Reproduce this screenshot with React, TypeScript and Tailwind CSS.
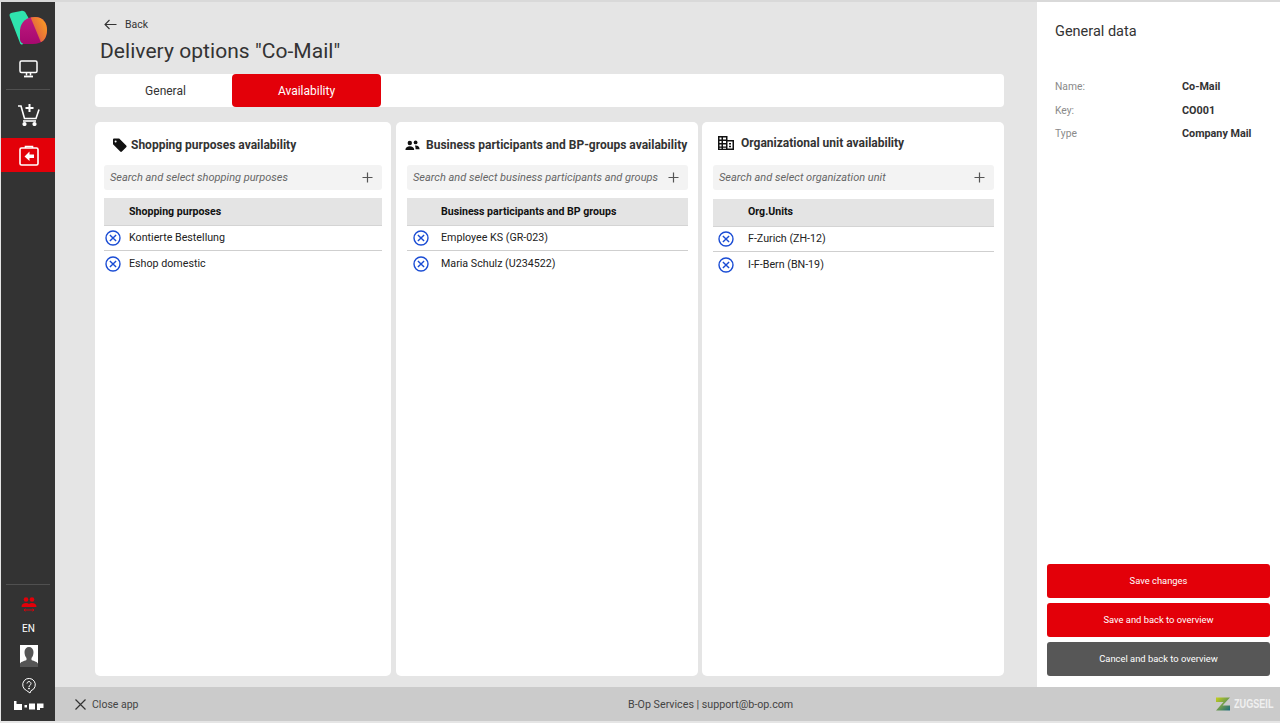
import React from "react";

const XCircle = () => (
  <svg width="16" height="16" viewBox="0 0 16 16" fill="none" stroke="#1a4cd4" strokeWidth="1.4" className="shrink-0">
    <circle cx="8" cy="8" r="7" />
    <path d="M4.900 4.900l6.200 6.200M11.100 4.900l-6.200 6.200" strokeWidth="1.400" />
  </svg>
);

const Plus = () => (
  <svg width="11" height="11" viewBox="0 0 11 11" stroke="#555" strokeWidth="1.2" className="shrink-0">
    <path d="M5.5 0.5v10M0.5 5.5h10" />
  </svg>
);

const TagIcon = () => (
  <svg width="15" height="15" viewBox="0 0 15 15" fill="#111" className="shrink-0">
    <path d="M1 1.5a1 1 0 0 1 1-1h5.2l7 7a1.2 1.2 0 0 1 0 1.7l-4.3 4.3a1.2 1.2 0 0 1-1.7 0l-7.2-7.2z" />
    <circle cx="3.6" cy="3.6" r="1" fill="#fff" />
  </svg>
);

const PeopleIcon = () => (
  <svg width="15" height="11" viewBox="0 0 15 11" fill="#111" className="shrink-0">
    <circle cx="4.8" cy="3" r="2.2" />
    <path d="M0.4 10c0-2.6 2-3.8 4.4-3.8S9.2 7.4 9.2 10z" />
    <circle cx="10.6" cy="2.4" r="1.9" />
    <path d="M10 5.5c2.6-.4 4.6.9 4.6 3.7h-4c0-1.500-.2-2.700-.6-3.700z" />
  </svg>
);

const BuildingIcon = () => (
  <svg width="16" height="14" viewBox="0 0 16 14" className="shrink-0">
    <path fill="#111" fillRule="evenodd" d="M0 0h9.500v4H16v10H0zM1.500 1.500v2h2v-2zM5 1.500v2h3v-2zM1.500 5v2h2V5zM5 5v2h3V5zM1.500 8.500v2h2v-2zM5 8.500v2h3v-2zM1.500 11.700v1h2v-1zM5 11.700v1h3v-1zM9.500 5.500v7h5v-7zM11 7h2v1.500h-2zM11 9.800h2v1.500h-2z" />
  </svg>
);

function Card({
  width, icon, title, titleGap, placeholder, head, rows, titleY, bodyLeft, textLeft, px, rowY, iconCell, headPb,
}: {
  width: string; icon: React.ReactNode; title: string; titleGap: string; placeholder: string; head: string; rows: string[];
  titleY: string; bodyLeft: string; textLeft: string; px: string; rowY: string; iconCell: string; headPb: string;
}) {
  return (
    <section className={`${width} ${px} h-[554px] shrink-0 rounded-[5px] bg-white flex flex-col`}>
      <div className={`${titleY} ${titleGap} ${bodyLeft} h-[22px] flex items-center text-[12px] font-bold text-[#333] whitespace-nowrap`}>
        {icon}
        <span>{title}</span>
      </div>
      <div className="h-[25px] rounded-[3px] bg-[#f3f3f3] flex items-center justify-between pl-[6px] pr-[9px]">
        <span className="italic text-[11px] text-[#666] whitespace-nowrap pt-[1px]">{placeholder}</span>
        <Plus />
      </div>
      <div className={`${textLeft} ${rowY} ${headPb} h-[28px] bg-[#e4e4e4] border-b border-[#d4d4d4] flex items-center text-[10.600px] font-bold text-[#111] whitespace-nowrap`}>
        {head}
      </div>
      {rows.map((r, i) => (
        <div key={r} className={`h-[25px] flex items-center text-[10.700px] text-[#222] border-b ${i === 0 ? "border-[#cfcfcf]" : "border-transparent pt-[2px]"}`}>
          <span className={`flex shrink-0 ${iconCell}`}>
            <XCircle />
          </span>
          <span>{r}</span>
        </div>
      ))}
    </section>
  );
}

const Sidebar = () => (
  <aside className="w-[54px] ml-[1px] h-full shrink-0 bg-[#333333] flex flex-col items-stretch text-white">
    <div className="h-[46px] flex items-start pl-[8px] pt-[8px]">
      <svg width="39" height="35" viewBox="0 0 39 35">
        <defs>
          <linearGradient id="logoA" x1="0" y1="0" x2="0" y2="1">
            <stop offset="0" stopColor="#c01a80" />
            <stop offset="1" stopColor="#a5086e" />
          </linearGradient>
          <linearGradient id="logoB" x1="1" y1="0.1" x2="0" y2="0.9">
            <stop offset="0" stopColor="#fba71b" />
            <stop offset="0.55" stopColor="#e8703a" />
            <stop offset="1" stopColor="#a8106f" />
          </linearGradient>
          <clipPath id="logoC">
            <path d="M11 20C12 11 18 7 26 7c8 0 12 6 12 13 0 9-5 14-14 14H16c-3.500 0-5-2.500-5-5z" />
          </clipPath>
        </defs>
        <path d="M0.800 6.500C0 4.500 1 3.200 3 2.800L12 1c2.500-.5 4 .5 5 2.500L24 16 14 34c-1.500 1-2.500 .5-3-1z" fill="#2fe3ae" />
        <g clipPath="url(#logoC)">
          <rect x="10" y="6" width="29" height="29" fill="url(#logoA)" />
          <path d="M21 6H39V35H33z" fill="url(#logoB)" />
        </g>
      </svg>
    </div>
    <div className="h-[42px] flex items-center justify-center border-b border-[#505050] mx-[5px] pt-[1px] pl-[1px]">
      <svg width="19" height="18" viewBox="0 0 19 18" fill="none" stroke="#fff" strokeWidth="1.500">
        <rect x="1" y="1" width="17" height="11.500" rx="1.500" />
        <path d="M7.500 13v2.500M11.500 13v2.500" />
        <path d="M5 16.500h9" strokeWidth="1.800" />
      </svg>
    </div>
    <div className="h-[48px] flex items-center justify-center">
      <svg width="23" height="24" viewBox="0 0 23 24" fill="none" stroke="#fff" strokeWidth="1.600">
        <path d="M1 4h3l3.500 12.500h11.500l3-9" />
        <path d="M6 19h13" />
        <path d="M12.500 2v8M8.500 6h8" strokeWidth="2" />
        <circle cx="7.500" cy="22" r="1.300" fill="#fff" />
        <circle cx="17.500" cy="22" r="1.300" fill="#fff" />
      </svg>
    </div>
    <div className="h-[34px] bg-[#e30009] flex items-center justify-center pl-[1px]">
      <svg width="20" height="21" viewBox="0 0 20 21" fill="none" stroke="#fff" strokeWidth="1.600">
        <rect x="1" y="3" width="18" height="17" rx="1.500" />
        <path d="M6.500 3V1.500h7V3" />
        <path d="M10.500 6.500l-5 5 5 4.500v-3H15V9.500h-4.500z" fill="#fff" stroke="none" />
      </svg>
    </div>
    <div className="flex-1" />
    <div className="mx-[5px] border-t border-[#505050] h-[13px]" />
    <div className="h-[22px] flex items-start justify-center pl-[1px]">
      <svg width="16" height="15" viewBox="0 0 16 15" fill="#e30009">
        <circle cx="5" cy="2.500" r="2.300" />
        <circle cx="11" cy="2.500" r="2.300" />
        <path d="M0.500 10c0-3 2-4 4.500-4 1.300 0 2.300.3 3 1 .7-.7 1.700-1 3-1 2.500 0 4.500 1 4.500 4z" />
        <path d="M3 13h10M3 13l1.500-1.200M3 13l1.500 1.200M13 13l-1.500-1.200M13 13l-1.500 1.200" stroke="#e30009" strokeWidth="0.900" fill="none" />
      </svg>
    </div>
    <div className="h-[17px] flex items-center justify-center text-[10px] pt-[1px] pl-[1px]">EN</div>
    <div className="h-[31px] flex items-end justify-center pl-[1px]">
      <svg width="18" height="22" viewBox="0 0 18 22">
        <rect width="18" height="22" fill="#fff" />
        <path d="M0 22v-3c0-2 4-3 6.500-4v-2c-1-1-2-3-2-6 0-3 2-5 4.500-5s4.500 2 4.500 5c0 3-1 5-2 6v2c2.500 1 6.500 2 6.500 4v3z" fill="#555" />
      </svg>
    </div>
    <div className="h-[27px] flex items-end justify-center pl-[1px]">
      <svg width="14" height="16" viewBox="0 0 14 16" fill="none" stroke="#fff" strokeWidth="1">
        <path d="M4.500 12.500A6.300 6.300 0 1 1 9 12.700l-1 2.300z" />
        <path d="M5 5.500a2 2 0 1 1 3 1.800c-.7.400-1 .8-1 1.700" />
        <circle cx="7" cy="10.500" r="0.500" fill="#fff" />
      </svg>
    </div>
    <div className="h-[27px] flex items-start justify-center pt-[7px] pl-[1px]">
      <svg width="30" height="9" viewBox="0 0 30 9" fill="#fff">
        <path d="M0 0h2.500v3H8v6H0z" />
        <rect x="10.500" y="4" width="2.500" height="2.500" />
        <rect x="15" y="2.500" width="6" height="6" />
        <path d="M23 2.500h6.500V7H26v2h-3z" />
      </svg>
    </div>
  </aside>
);

export default function App() {
  return (
    <div className="w-[1280px] h-[723px] overflow-hidden bg-[#e5e5e5] flex flex-col font-['Roboto',sans-serif]">
      <div className="h-[2px] shrink-0 bg-[#d9d9d9]" />
      <div className="h-[719px] flex">
        <Sidebar />
        <div className="flex-1 min-w-0 flex flex-col">
          <div className="h-[685px] flex">
            <main className="w-[982px] shrink-0 pl-[40px] bg-[#e5e5e5]">
              <div className="h-[44px] pt-[13px] pl-[9px] flex items-start gap-[8px] text-[10.500px] text-[#333]">
                <svg width="13" height="18" viewBox="0 0 13 18" fill="none" stroke="#333" strokeWidth="1.100" className="mt-0">
                  <path d="M12.500 9.500H1M5.500 5L1 9.500 5.500 14" />
                </svg>
                <span className="leading-[18px] mt-[1px]">Back</span>
              </div>
              <h1 className="h-[28px] pl-[5px] text-[21px] leading-[23px] font-normal text-[#333] tracking-[0.05px] whitespace-nowrap -mt-[6px] mb-[6px]">Delivery options "Co-Mail"</h1>
              <div className="w-[909px] h-[33px] rounded-[4px] bg-white flex text-[12px]">
                <div className="w-[137px] flex items-center justify-center pl-[4px] text-[#333]">General</div>
                <div className="w-[149px] rounded-[4px] bg-[#e30009] text-white flex items-center justify-center">Availability</div>
              </div>
              <div className="mt-[15px] flex gap-[5px] w-[909px]">
                <Card width="w-[296px]" px="px-[9px]" icon={<TagIcon />} title="Shopping purposes availability" titleGap="gap-[4px]" titleY="mt-[12px] mb-[9px]" bodyLeft="pl-[8px]" placeholder="Search and select shopping purposes" head="Shopping purposes" textLeft="pl-[25px]" rowY="mt-[8px]" headPb="" iconCell="w-[25px] pl-[1px]" rows={["Kontierte Bestellung", "Eshop domestic"]} />
                <Card width="w-[302px]" px="pl-[11px] pr-[10px]" icon={<PeopleIcon />} title="Business participants and BP-groups availability" titleGap="gap-[6px]" titleY="mt-[12px] mb-[9px]" bodyLeft="-ml-[2px]" placeholder="Search and select business participants and groups" head="Business participants and BP groups" textLeft="pl-[34px]" rowY="mt-[8px]" headPb="" iconCell="w-[34px] pl-[6px]" rows={["Employee KS (GR-023)", "Maria Schulz (U234522)"]} />
                <div className="-ml-[1px]">
                  <Card width="w-[302px]" px="pl-[11px] pr-[10px]" icon={<BuildingIcon />} title="Organizational unit availability" titleGap="gap-[7px]" titleY="mt-[10px] mb-[11px]" bodyLeft="pl-[5px]" placeholder="Search and select organization unit" head="Org.Units" textLeft="pl-[35px]" rowY="mt-[9px]" headPb="pb-[2px]" iconCell="w-[35px] pl-[5px]" rows={["F-Zurich (ZH-12)", "I-F-Bern (BN-19)"]} />
                </div>
              </div>
            </main>
            <aside className="w-[243px] shrink-0 bg-white flex flex-col pl-[18px]">
              <h2 className="mt-[21px] text-[14.500px] leading-[18px] font-normal text-[#333]">General data</h2>
              <dl className="mt-[39px] flex flex-col gap-[9px] leading-[14.500px]">
                {[["Name:", "Co-Mail"], ["Key:", "CO001"], ["Type", "Company Mail"]].map(([k, v]) => (
                  <div key={k} className="flex">
                    <dt className="w-[127px] text-[#8a8a8a] text-[10.300px]">{k}</dt>
                    <dd className="font-bold text-[#333] text-[10.800px]">{v}</dd>
                  </div>
                ))}
              </dl>
              <div className="flex-1" />
              <div className="-ml-[8px] mr-[10px] mb-[11px] flex flex-col gap-[5px] text-[9.400px] text-white">
                <div className="h-[34px] pt-[1px] rounded-[3px] bg-[#e30009] flex items-center justify-center">Save changes</div>
                <div className="h-[34px] pt-[1px] rounded-[3px] bg-[#e30009] flex items-center justify-center">Save and back to overview</div>
                <div className="h-[34px] pt-[1px] rounded-[3px] bg-[#575757] flex items-center justify-center">Cancel and back to overview</div>
              </div>
            </aside>
          </div>
          <footer className="h-[34px] bg-[#cbcbcb] flex items-center text-[10.500px] text-[#444] relative">
            <div className="pl-[20px] flex items-center gap-[6px]">
              <svg width="11" height="11" viewBox="0 0 11 11" stroke="#333" strokeWidth="1.200"><path d="M0.500 0.500l10 10M10.500 0.500l-10 10" /></svg>
              <span className="pt-[1px]">Close app</span>
            </div>
            <div className="absolute left-[573px] top-[11px] text-[10.700px] leading-[14px] whitespace-nowrap">B-Op Services | support@b-op.com</div>
            <div className="absolute left-[1161px] top-[10px] flex items-center gap-[4px]">
              <svg width="14" height="14" viewBox="0 0 14 14">
                <defs>
                  <linearGradient id="zG" x1="0" y1="0" x2="1" y2="1">
                    <stop offset="0" stopColor="#c7d11a" />
                    <stop offset="1" stopColor="#1c6a80" />
                  </linearGradient>
                </defs>
                <path d="M0 0.500h14L6.500 8.500H14V13.500H0L7.500 5H0z" fill="url(#zG)" />
              </svg>
              <span className="w-[39px] text-[13px] leading-[14px] font-bold text-[#f0f0f0] font-['Liberation_Sans',sans-serif] [transform:scaleX(0.7)] origin-left whitespace-nowrap">ZUGSEIL</span>
            </div>
          </footer>
        </div>
      </div>
    </div>
  );
}
